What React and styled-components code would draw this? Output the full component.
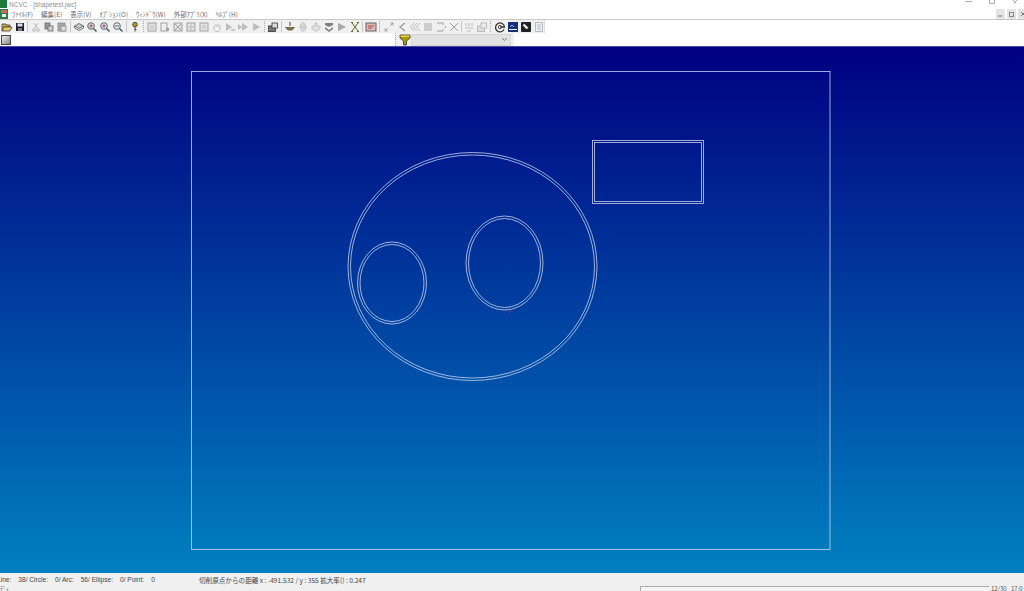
import React from 'react';
import styled, { createGlobalStyle } from 'styled-components';

const GlobalStyle = createGlobalStyle`
  html, body { margin: 0; height: 100%; overflow: hidden; background: #fff; }
  #root { height: 100%; }
  body { font-family: "Noto Sans CJK JP", "Liberation Sans", sans-serif; }
`;

const Window = styled.div`
  width: 1024px;
  height: 591px;
  display: flex;
  flex-direction: column;
  overflow: hidden;
`;

const TitleBar = styled.div`
  height: 8px;
  flex: none;
  display: flex;
  align-items: flex-start;
  justify-content: space-between;
  font-size: 6.5px;
  line-height: 7px;
  color: #8f8f8f;
  font-family: "Liberation Sans", sans-serif;
`;

const TitleText = styled.span`
  display: flex;
  align-items: center;
  gap: 2px;
`;

const WinButtons = styled.div`
  display: flex;
  align-items: flex-start;
  gap: 17px;
  padding-right: 6px;
`;

const MenuBar = styled.div`
  height: 12px;
  flex: none;
  box-sizing: border-box;
  display: flex;
  align-items: center;
  border-bottom: 1px solid #c8c8c8;
`;

const MenuItems = styled.div`
  display: flex;
  flex: 1;
  gap: 8px;
  margin-left: 4px;
`;

const MenuItem = styled.span`
  font-size: 6.5px;
  line-height: 10px;
  color: #666;
  white-space: nowrap;
`;

const MdiButtons = styled.div`
  display: flex;
  gap: 2px;
  align-self: flex-start;
  margin: 1px -3px 0 0;
`;

const MdiButton = styled.span`
  width: 9px;
  height: 10px;
  background: #e4e4e4;
  display: flex;
  align-items: center;
  justify-content: center;
`;

const ToolRow = styled.div`
  height: 13px;
  flex: none;
  display: flex;
  align-items: center;
`;

const MainTools = styled.div`
  width: 545px;
  height: 13px;
  display: flex;
  align-items: center;
  background: #f0f0f0;
  border-right: 1px solid #dcdcdc;
  box-sizing: border-box;
`;

const Group = styled.div`
  display: flex;
  align-items: center;
`;

const Sep = styled.span`
  width: 0;
  height: 11px;
  margin: 0 ${p => p.$m}px;
  border-left: 1px ${p => (p.$dotted ? 'dotted #a8a8a8' : 'solid #c8c8c8')};
  flex: none;
`;

const Tool = styled.span`
  width: 13px;
  height: 13px;
  flex: none;
  display: flex;
  align-items: center;
  justify-content: center;
`;

const SmallBox = styled.span`
  width: 8px;
  height: 8px;
  margin-left: 1px;
  border: 1px solid #444;
  background: linear-gradient(135deg, #eee, #888);
`;

const FilterBar = styled.div`
  margin-left: 384px;
  width: 116px;
  height: 13px;
  display: flex;
  align-items: center;
  background: #f0f0f0;
  border-left: 1px dotted #a8a8a8;
  padding-left: 2px;
`;

const Combo = styled.div`
  width: 100px;
  height: 12px;
  box-sizing: border-box;
  background: #e2e2e2;
  border: 1px solid #d4d4d4;
  display: flex;
  align-items: center;
  justify-content: flex-end;
  padding-right: 2px;
`;

const Canvas = styled.div`
  height: 527px;
  flex: none;
  border-top: 1px solid #4a4a9a;
  box-sizing: border-box;
  background: linear-gradient(180deg, #000080 0%, #0080c0 100%);
`;

const Drawing = styled.svg`
  display: block;
  width: 100%;
  height: 100%;
`;

const StatusArea = styled.div`
  flex: 1;
  background: #f0f0f0;
  display: flex;
  flex-direction: column;
`;

const StatusRow = styled.div`
  height: 13px;
  flex: none;
  display: flex;
  align-items: center;
  font-size: 6.6px;
  color: #444;
  white-space: nowrap;
`;

const Counts = styled.span`
  width: 199px;
  font-family: "Liberation Sans", sans-serif;
  display: flex;
  gap: 7px;
`;

const FirstCount = styled.span`
  margin-left: -3px;
`;

const Info = styled.span`
  flex: 1;
`;

const BottomRow = styled.div`
  flex: 1;
  display: flex;
  align-items: flex-start;
  font-size: 6px;
  color: #555;
  overflow: hidden;
`;

const Caption = styled.span`
  margin-left: -3px;
  line-height: 6px;
`;

const Progress = styled.div`
  margin-left: auto;
  width: 349px;
  height: 5px;
  box-sizing: border-box;
  background: #f4f4f4;
  border-top: 1px solid #a8a8a8;
  border-left: 1px solid #a8a8a8;
`;

const Clock = styled.span`
  width: ${p => p.$w}px;
  font-size: 6px;
  line-height: 6px;
  padding-left: 2px;
  box-sizing: border-box;
  white-space: nowrap;
`;

const Line = styled.g`
  fill: none;
  stroke: #c8d2ec;
  stroke-width: 0.8;
`;

// every icon is a 12x12 drawing
const Svg = ({ children }) => (
  <svg width="12" height="12" viewBox="0 0 12 12">{children}</svg>
);

const G = '#bcbcbc';
const D = '#a0a0a0';

const icons = {
  open: <Svg><path d="M1 3h4l1 1h3v2H3L1 10z" fill="#c8a840" stroke="#444" strokeWidth=".8" /><path d="M3 6h8l-2 4H1z" fill="#e8c860" stroke="#444" strokeWidth=".8" /></Svg>,
  save: <Svg><rect x="2" y="2" width="8" height="8" fill="#1c2028" /><rect x="3.5" y="2.5" width="5" height="3" fill="#dde" /><rect x="4" y="7" width="4" height="3" fill="#778" /></Svg>,
  cut: <Svg><path d="M4 2l3 5M8 2L5 7" stroke={G} fill="none" /><circle cx="4" cy="9" r="1.4" stroke={G} fill="none" /><circle cx="8" cy="9" r="1.4" stroke={G} fill="none" /></Svg>,
  copy: <Svg><rect x="2" y="2" width="5" height="6" fill="#999" stroke="#666" strokeWidth=".8" /><rect x="5" y="5" width="5" height="5" fill="#ccc" stroke="#666" strokeWidth=".8" /></Svg>,
  paste: <Svg><rect x="2" y="2" width="7" height="8" fill="#aaa" stroke="#888" strokeWidth=".8" /><rect x="5" y="5" width="5" height="5" fill="#ddd" stroke="#888" strokeWidth=".8" /></Svg>,
  layers: <Svg><path d="M1.5 5L6 2.5 10.5 5 6 7.5z" fill="#ccc" stroke="#555" strokeWidth=".8" /><path d="M1.5 7L6 9.5 10.5 7M1.5 5v2M10.5 5v2" fill="none" stroke="#555" strokeWidth=".8" /></Svg>,
  zoom: <Svg><circle cx="5" cy="5" r="3.3" fill="#d8e4e4" stroke="#566" /><path d="M7.5 7.5L10.5 10.5" stroke="#455" strokeWidth="1.4" /><rect x="3.6" y="3.6" width="2.8" height="2.8" fill="#a68" /></Svg>,
  zoomIn: <Svg><circle cx="5" cy="5" r="3.3" fill="#e8f0f0" stroke="#566" /><path d="M7.5 7.5L10.5 10.5" stroke="#455" strokeWidth="1.4" /><path d="M3 5h4M5 3v4" stroke="#a48" /></Svg>,
  zoomOut: <Svg><circle cx="5" cy="5" r="3.3" fill="#e8f0f0" stroke="#566" /><path d="M7.5 7.5L10.5 10.5" stroke="#455" strokeWidth="1.4" /><path d="M3 5h4" stroke="#566" /></Svg>,
  key: <Svg><circle cx="6" cy="3.6" r="2.3" fill="#b09820" stroke="#443" strokeWidth=".9" /><path d="M6 6v4.5M6 8.5h1.5" stroke="#443" /></Svg>,
  page: <Svg><rect x="2" y="2" width="8" height="8" fill="#e4e4e4" stroke={D} /><path d="M4 5h4M4 7h4" stroke={G} /></Svg>,
  pageB: <Svg><rect x="2" y="2" width="6" height="8" fill="#eee" stroke={D} /><rect x="7" y="7" width="3" height="3" fill={D} /></Svg>,
  pageX: <Svg><rect x="2" y="2" width="8" height="8" fill="#e4e4e4" stroke={D} /><path d="M3 3l6 6M9 3l-6 6" stroke={D} /></Svg>,
  pageC: <Svg><rect x="2" y="2" width="8" height="8" fill="#e4e4e4" stroke={D} /><path d="M6 2v8M2 6h8" stroke={G} /></Svg>,
  hand: <Svg><path d="M3 7V5M5 6V3M7 6V3M9 7V4M3 7c0 2 1 3.5 3 3.5S9 9 9 7" stroke={G} fill="#f4f4f4" /></Svg>,
  playBar: <Svg><path d="M2 2l6 4-6 4z" fill={G} /><rect x="7" y="8" width="4" height="2" fill="#c8c8c8" /></Svg>,
  playFf: <Svg><path d="M1 3l4 3-4 3zM5 2l6 4-6 4z" fill={G} /></Svg>,
  play: <Svg><path d="M3 2l7 4-7 4z" fill={G} /></Svg>,
  settings: <Svg><rect x="1.5" y="5" width="7" height="5.5" fill="#777" stroke="#333" strokeWidth=".8" /><rect x="5" y="2" width="5.5" height="5" fill="#ddd" stroke="#333" strokeWidth=".8" /></Svg>,
  spinner: <Svg><path d="M6 1v4" stroke="#444" /><path d="M1.5 6.5h9L8 9H4z" fill="#8a7a30" stroke="#555" strokeWidth=".8" /></Svg>,
  blockA: <Svg><path d="M6 1.5l2.5 2v5L6 10.5l-2.5-2v-5zM2 6h8" fill="#d8d8d8" stroke={G} strokeWidth=".8" /></Svg>,
  blockB: <Svg><path d="M5 2h2v3h3v3l-4 2.5L2 8V5h3z" fill="#e0e0e0" stroke={G} strokeWidth=".8" /></Svg>,
  chevrons: <Svg><path d="M2 2h8v2L6 6 2 4zM2 6l4 3 4-3v2l-4 3-4-3z" fill="#808080" /></Svg>,
  playG: <Svg><path d="M2 2l8 4-8 4z" fill="#a8a8a8" /></Svg>,
  cross: <Svg><path d="M2 1.5h2M8 1.5h2M2 10.5h2M8 10.5h2M3 2l6 8M9 2l-6 8" stroke="#5a6a2a" strokeWidth="1" fill="none" /></Svg>,
  film: <Svg><rect x="1" y="2" width="10" height="8" fill="#d8b8b8" stroke="#666" /><path d="M3 5h6M3 7h4" stroke="#b44" /></Svg>,
  expand: <Svg><path d="M7 5l3-3M7.5 2H10v2.5M5 7l-3 3M2 7.5V10h2.5" stroke={D} fill="none" /></Svg>,
  angle: <Svg><path d="M9 2L4 6l5 4" stroke={D} strokeWidth="1.5" fill="none" /></Svg>,
  angles: <Svg><path d="M5 2L1.5 6 5 10M8 2L4.5 6 8 10M11 2L7.5 6l3.5 4" stroke={G} fill="none" /></Svg>,
  square: <Svg><rect x="2" y="2" width="8" height="8" fill="#cdcdcd" /></Svg>,
  bracket: <Svg><path d="M2 2h6v2M8 8v2H2M10.5 5v2" stroke={D} fill="none" /></Svg>,
  x: <Svg><path d="M2 2l8 8M10 2l-8 8" stroke={D} fill="none" /></Svg>,
  tree: <Svg><path d="M3 2v3M6 2v3M9 2v3M2 7h8M4 10h4" stroke={G} fill="none" /></Svg>,
  settingsG: <Svg><rect x="1.5" y="5" width="7" height="5.5" fill="#ddd" stroke={G} /><rect x="5" y="2" width="5.5" height="5" fill="#eee" stroke={G} /></Svg>,
  at: <Svg><path d="M10 8.5A4.5 4.5 0 1 1 10.5 6H6" fill="none" stroke="#333" strokeWidth="1.3" /><circle cx="6" cy="6" r="1.7" fill="none" stroke="#555" /></Svg>,
  cad: <Svg><rect x="1" y="1" width="10" height="10" fill="#14307a" /><path d="M2 8.5h8" stroke="#fff" /><path d="M3 6l2-2 2 2" stroke="#9cf" fill="none" /></Svg>,
  dark: <Svg><rect x="1" y="1" width="10" height="10" rx="1" fill="#222" /><path d="M3.5 3.5l4 4" stroke="#eee" strokeWidth="2.4" /></Svg>,
  doc: <Svg><rect x="2.5" y="1.5" width="7" height="9" fill="#eef" stroke={G} /><path d="M4 4h4M4 6h4M4 8h4" stroke={G} /></Svg>,
};

const toolGroups = [
  { names: ['open', 'save'], sep: 1 },
  { names: ['cut', 'copy', 'paste'], sep: 1.5 },
  { names: ['layers', 'zoom', 'zoomIn', 'zoomOut'], sep: 1.5 },
  { names: ['key'], sep: 1.5, dotted: true },
  { names: ['page', 'pageB', 'pageX', 'pageC', 'page', 'hand', 'playBar', 'playFf', 'play'], sep: 1.5, dotted: true },
  { names: ['settings'], sep: 1.5 },
  { names: ['spinner', 'blockA', 'blockB', 'chevrons', 'playG', 'cross'], sep: 1 },
  { names: ['film'], sep: 2, dotted: true },
  { names: ['expand', 'angle', 'angles', 'square', 'bracket', 'x'], sep: 0.5 },
  { names: ['tree', 'settingsG'], sep: 2, dotted: true },
  { names: ['at', 'cad', 'dark', 'doc'] },
];

const menus = ['ﾌｧｲﾙ(F)', '編集(E)', '表示(V)', 'ｵﾌﾟｼｮﾝ(O)', 'ｳｨﾝﾄﾞｳ(W)', '外部ｱﾌﾟﾘ(X)', 'ﾍﾙﾌﾟ(H)'];

export default function App() {
  return (
    <Window>
      <GlobalStyle />
      <TitleBar>
        <TitleText>
          <svg width="7" height="8" viewBox="0 0 7 8"><rect width="7" height="8" fill="#1a7a3a" /></svg>
          NCVC - [shapetest.jwc]
        </TitleText>
        <WinButtons>
          <svg width="7" height="4" viewBox="0 0 7 4"><path d="M0 1.5h7" stroke="#aaa" /></svg>
          <svg width="6" height="4" viewBox="0 0 6 4"><path d="M.5 0v3.5h5V0" stroke="#aaa" fill="none" /></svg>
          <svg width="6" height="4" viewBox="0 0 6 4"><path d="M1 0l3 3.5M5 0L2 3.5" stroke="#aaa" fill="none" /></svg>
        </WinButtons>
      </TitleBar>
      <MenuBar>
        <svg width="8" height="10" viewBox="0 0 8 10">
          <rect width="8" height="10" fill="#2a7a4a" />
          <rect x="1" y="1" width="6" height="3" fill="#c65" />
          <rect x="2" y="5" width="4" height="3" fill="#eee" />
        </svg>
        <MenuItems>
          {menus.map(m => <MenuItem key={m}>{m}</MenuItem>)}
        </MenuItems>
        <MdiButtons>
          <MdiButton><svg width="5" height="6" viewBox="0 0 5 6"><path d="M0 5h4" stroke="#777" /></svg></MdiButton>
          <MdiButton><svg width="6" height="6" viewBox="0 0 6 6"><rect x=".5" y="1.5" width="4" height="4" fill="none" stroke="#888" /></svg></MdiButton>
          <MdiButton><svg width="6" height="6" viewBox="0 0 6 6"><path d="M1 1l4 4M5 1L1 5" stroke="#777" /></svg></MdiButton>
        </MdiButtons>
      </MenuBar>
      <ToolRow>
        <MainTools>
          {toolGroups.map((group, i) => (
            <React.Fragment key={i}>
              <Group>
                {group.names.map((name, j) => <Tool key={j}>{icons[name]}</Tool>)}
              </Group>
              {group.sep && <Sep $m={group.sep} $dotted={group.dotted} />}
            </React.Fragment>
          ))}
        </MainTools>
      </ToolRow>
      <ToolRow>
        <SmallBox />
        <FilterBar>
          <Tool>
            <svg width="12" height="12" viewBox="0 0 12 12">
              <path d="M1 1h10v3L7.5 7v4h-3V7L1 4z" fill="#a89810" stroke="#333" strokeWidth=".8" />
              <rect x="1.5" y="1.5" width="9" height="1.5" fill="#e8d840" />
            </svg>
          </Tool>
          <Combo>
            <svg width="7" height="5" viewBox="0 0 7 5"><path d="M1 1l2.5 2.5L6 1" stroke="#777" fill="none" /></svg>
          </Combo>
        </FilterBar>
      </ToolRow>
      <Canvas>
        <Drawing viewBox="0 47 1024 526" preserveAspectRatio="none">
          <Line>
            <rect x="191.5" y="71.5" width="638.5" height="478" />
            <rect x="592.5" y="140.5" width="111" height="63" />
            <rect x="594.5" y="142.5" width="107" height="59" />
            <ellipse cx="472.5" cy="266.5" rx="124.5" ry="114" />
            <ellipse cx="472.5" cy="266.5" rx="122" ry="111.5" />
            <ellipse cx="392" cy="283" rx="34.5" ry="41" />
            <ellipse cx="392" cy="283" rx="32" ry="38.5" />
            <ellipse cx="504.5" cy="263" rx="38.5" ry="47" />
            <ellipse cx="504.5" cy="263" rx="36" ry="44.5" />
          </Line>
          <path d="M510 308v8M507 311h6" stroke="#a03060" strokeWidth=".7" opacity=".6" />
        </Drawing>
      </Canvas>
      <StatusArea>
        <StatusRow>
          <Counts>
            <FirstCount>Line:</FirstCount>
            <span>38/ Circle:</span>
            <span>0/ Arc:</span>
            <span>56/ Ellipse:</span>
            <span>0/ Point:</span>
            <span>0</span>
          </Counts>
          <Info>切削原点からの距離 x : -491.532 / y : 355 拡大率() : 0.247</Info>
        </StatusRow>
        <BottomRow>
          <Caption>ﾚﾃﾞｨ</Caption>
          <Progress />
          <Clock $w={20}>12/30</Clock>
          <Clock $w={15}>17:0</Clock>
        </BottomRow>
      </StatusArea>
    </Window>
  );
}
